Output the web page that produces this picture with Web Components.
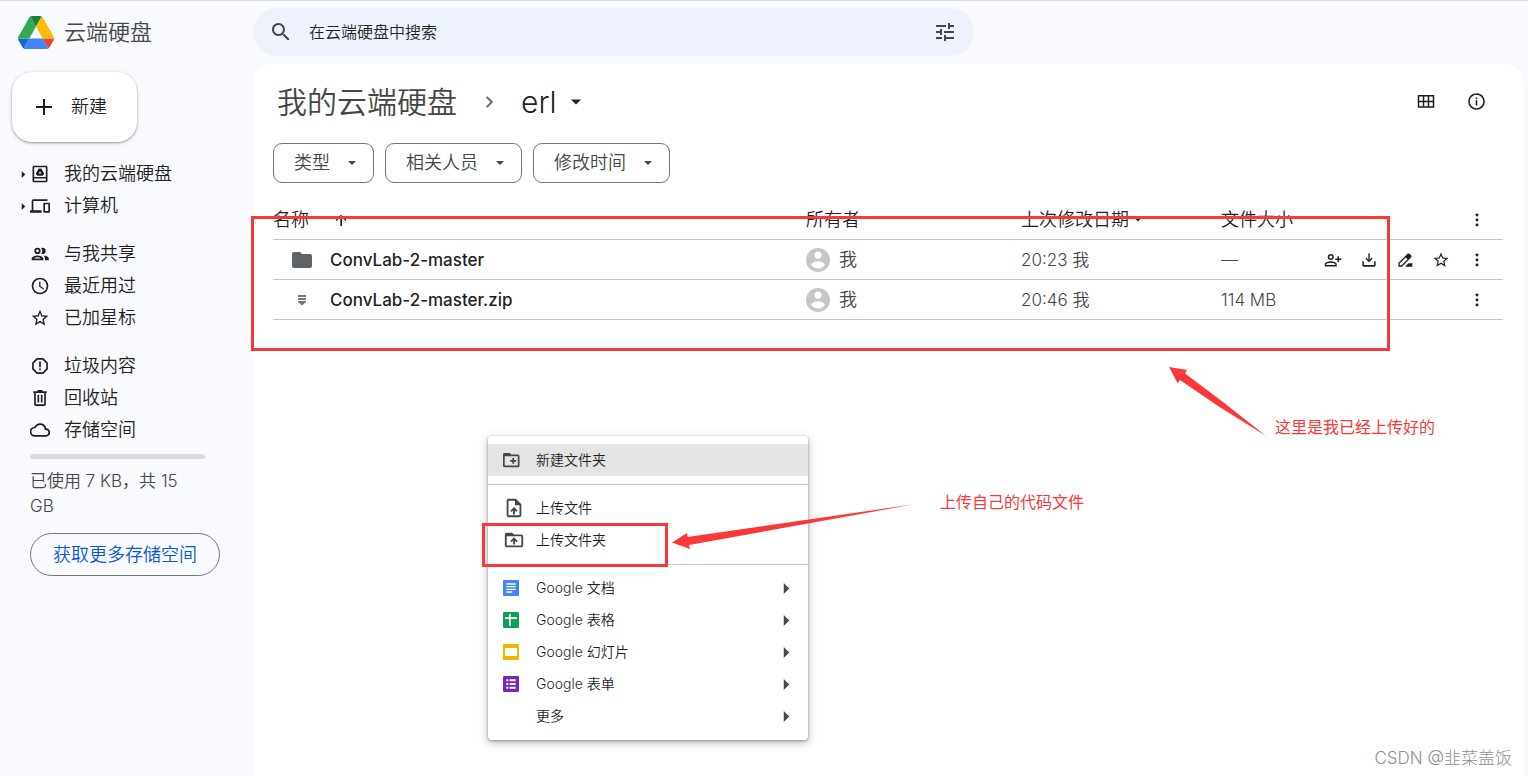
<!DOCTYPE html>
<html lang="zh-CN">
<head>
<meta charset="utf-8">
<title>erl - Google 云端硬盘</title>
<style>
html{height:100%}
body{margin:0;min-height:100%;display:flex;flex-direction:column;background:#f8fafd;color:#1f1f1f;font-family:Inter,"Noto Sans CJK SC",sans-serif;font-weight:350;font-size:18px}
</style>
</head>
<body>
<drive-app></drive-app>
<script>
const ICONS = {
  search: '<path d="M15.500 14h-.8l-.3-.3A6.500 6.500 0 1 0 13.700 14.400l.3.3v.8l5 5 1.500-1.500-5-5zm-6 0a4.500 4.500 0 1 1 0-9 4.500 4.500 0 0 1 0 9z"/>',
  tune: '<path d="M3 17v2h6v-2H3zM3 5v2h10V5H3zm10 16v-2h8v-2h-8v-2h-2v6h2zM7 9v2H3v2h4v2h2V9H7zm14 4v-2H11v2h10zm-6-4h2V7h4V5h-4V3h-2v6z"/>',
  plus: '<path d="M4 11h7V4h2v7h7v2h-7v7h-2v-7H4z"/>',
  drive: '<path d="M5 2h14a2 2 0 0 1 2 2v16a2 2 0 0 1-2 2H5a2 2 0 0 1-2-2V4a2 2 0 0 1 2-2zm0 2v11.500h14V4zm0 13.500V20h14v-2.500z" fill-rule="evenodd"/><path d="M10.500 5.500h3l3.500 5.800-1.500 2.700h-7L7 11.300zM12 8.600l-1.500 2.700h3z" fill-rule="evenodd"/>',
  devices: '<path d="M4 6h17V4H4a2 2 0 0 0-2 2v11H0v3h14v-3H4V6zm19 2h-6a1 1 0 0 0-1 1v10a1 1 0 0 0 1 1h6a1 1 0 0 0 1-1V9a1 1 0 0 0-1-1zm-1 10h-4v-8h4v8z"/>',
  people: '<path d="M9 13.700c-2.300 0-7 1.200-7 3.500V19.500h14v-2.300c0-2.300-4.700-3.500-7-3.500zM4.300 17.500c.8-.9 3-1.700 4.700-1.700s3.900.8 4.700 1.700zM9 12a3.700 3.700 0 1 0 0-7.500A3.700 3.700 0 0 0 9 12zm0-5.400a1.700 1.700 0 1 1 0 3.400 1.700 1.700 0 0 1 0-3.400zm7 7.200c1.200.8 2 1.900 2 3.400v2.300h4.500v-2.300c0-2-3.500-3.100-6.500-3.400zM15 12a3.700 3.700 0 1 0 0-7.500c-.5 0-1.100.1-1.600.4a5.500 5.500 0 0 1 0 6.700c.5.200 1 .4 1.600.4z"/>',
  clock: '<path d="M12 2a10 10 0 1 0 0 20 10 10 0 0 0 0-20zm0 18a8 8 0 1 1 0-16 8 8 0 0 1 0 16zm.5-13H11v6l5.200 3.200.8-1.300-4.500-2.700z"/>',
  star: '<path d="M22 9.200l-7.200-.6L12 2 9.200 8.600 2 9.200l5.500 4.800L5.800 21 12 17.300 18.200 21l-1.600-7zM12 15.400l-3.800 2.300 1-4.300-3.300-2.900 4.400-.4L12 6.100l1.700 4 4.400.4-3.300 2.900 1 4.300z"/>',
  spam: '<path d="M15.900 2.500H8.100L2.500 8.100v7.800l5.600 5.600h7.800l5.600-5.600V8.100zM19.500 15.100l-4.400 4.400H8.900l-4.400-4.400V8.900l4.400-4.400h6.200l4.400 4.400z" fill-rule="evenodd"/><path d="M11 6.500h2v7h-2zM11 15h2v2.200h-2z"/>',
  trash: '<path d="M9 2.500h6V4h5v2h-1v13.500a2 2 0 0 1-2 2H7a2 2 0 0 1-2-2V6H4V4h5zM7 6v13.500h10V6z" fill-rule="evenodd"/><path d="M9 8h2v9.500H9zM13 8h2v9.500h-2z"/>',
  cloud: '<path d="M19.400 10A7.500 7.500 0 0 0 12 4C9.100 4 6.600 5.600 5.400 8A6 6 0 0 0 6 20h13a5 5 0 0 0 .4-10zM19 18H6a4 4 0 0 1-.4-8l1-.1.5-1A5.500 5.500 0 0 1 17.400 10.400l.3 1.500 1.500.1A3 3 0 0 1 19 18z"/>',
  grid: '<path d="M1 4h22v17H1zm2 2v5.500h4.700V6zm6.700 0v5.500h4.600V6zm6.600 0v5.500H21V6zM3 13.500V19h4.700v-5.500zm6.700 0V19h4.600v-5.500zm6.600 0V19H21v-5.500z" fill-rule="evenodd"/>',
  info: '<path d="M11 10.500h2V17h-2zM11 7h2v2h-2zm1-5.500a10.500 10.500 0 1 0 0 21 10.500 10.500 0 0 0 0-21zm0 19a8.500 8.500 0 1 1 0-17 8.500 8.500 0 0 1 0 17z"/>',
  up: '<path d="M4 12l1.400 1.400L11 7.800V21h2.500V7.800l5.100 5.600L20 12l-8-8z"/>',
  chevron: '<path d="M10 5L8.400 6.600l5.400 5.400-5.400 5.400L10 19l7-7z"/>',
  folder: '<path d="M10 4H4a2 2 0 0 0-2 2v12c0 1.100.9 2 2 2h16a2 2 0 0 0 2-2V8a2 2 0 0 0-2-2h-8z"/>',
  zip: '<path d="M4 2h16v4H4zM4 8h16v4H4zM4 14h16v2l-8 7-8-7z"/>',
  avatar: '<path d="M12 0a12 12 0 1 0 0 24 12 12 0 0 0 0-24zm0 3.500a3.600 3.600 0 1 1 0 7.200 3.600 3.600 0 0 1 0-7.200zM12 20.500c-3 0-5.600-1.500-7-3.800.7-2.300 4.700-3.500 7-3.500s6.300 1.200 7 3.500c-1.400 2.300-4 3.800-7 3.800z" fill-rule="evenodd"/>',
  share: '<path d="M9 12a4 4 0 1 0 0-8 4 4 0 0 0 0 8zm0-6a2 2 0 1 1 0 4 2 2 0 0 1 0-4zm0 7.500c-2.700 0-8 1.300-8 4V20.500h16v-3c0-2.700-5.300-4-8-4zm6 5H3v-1c0-.6 3-2 6-2s6 1.400 6 2zM20 10V7h-2v3h-3v2h3v3h2v-3h3v-2z"/>',
  download: '<path d="M11 2h2v9.500l3-3 1.400 1.500L12 15.500 6.600 10 8 8.500l3 3zM2 14h2.300v5.500h15.400V14H22v6a2 2 0 0 1-2 2H4a2 2 0 0 1-2-2z"/>',
  pen: '<path d="M18.900 2.800a2.500 2.500 0 0 0-3.300 0L2 16.400V22h5.600L21 8.300a2.500 2.500 0 0 0 0-3.300zM6.800 20H4v-2.700L13 8.200l2.800 2.800zM12 22l5-5h6v5z"/>',
  more: '<circle cx="12" cy="4.500" r="2.200"/><circle cx="12" cy="12" r="2.200"/><circle cx="12" cy="19.500" r="2.200"/>',
  newFolder: '<path d="M20 4.500h-9l-2-2H2a2 2 0 0 0-2 2v15c0 1.100.9 2 2 2h18a2 2 0 0 0 2-2v-13a2 2 0 0 0-2-2zm-.3 14.700H2.300V7h17.400zM12.500 17h2.300v-2.800h2.700V12h-2.700V9.200h-2.300V12H9.700v2.200h2.800z"/>',
  upFile: '<path d="M14 2H6a2 2 0 0 0-2 2v16c0 1.100.9 2 2 2h12a2 2 0 0 0 2-2V8zm4 18H6V4h7v5h5zM8 15l1.400 1.400 1.600-1.600V19h2v-4.200l1.600 1.600L16 15l-4-4z"/>',
  upFolder: '<path d="M20 6h-8l-2-2H4a2 2 0 0 0-2 2v12c0 1.100.9 2 2 2h16a2 2 0 0 0 2-2V8a2 2 0 0 0-2-2zm0 12H4V8h16zM8 13l1.400 1.400 1.600-1.600V17h2v-4.200l1.600 1.600L16 13l-4-4z"/>',
  docs: '<rect width="24" height="24" rx="2" fill="#4285f4"/><path d="M5 5h14v2H5zM5 9h14v2H5zM5 13h14v2H5zM5 17h9v2H5z" fill="#fff"/>',
  sheets: '<rect width="24" height="24" rx="2" fill="#0f9d58"/><path d="M3 8h6V3h2.500v5H21v2.500h-9.500V21H9V10.500H3z" fill="#fff"/>',
  slides: '<rect width="24" height="24" rx="2" fill="#f4b400"/><path d="M3 6h18v12H3z" fill="#fff"/>',
  forms: '<rect width="24" height="24" rx="2" fill="#7627bb"/><path d="M5 5h3v3H5zM10 5h9v3h-9zM5 10.500h3v3H5zM10 10.500h9v3h-9zM5 16h3v3H5zM10 16h9v3h-9z" fill="#fff"/>',
  none: '',
  caretDown: '<path d="M0 6h24L12 18z"/>',
  caretRight: '<path d="M6 0v24l12-12z"/>'
};

function define(name, html, setup) {
  const tpl = document.createElement('template');
  tpl.innerHTML = html;
  customElements.define(name, class extends HTMLElement {
    connectedCallback() {
      if (this.shadowRoot) return;
      const root = this.attachShadow({mode: 'open'});
      root.append(tpl.content.cloneNode(true));
      if (setup) setup(this, root);
    }
  });
}

define('g-icon', `<style>:host{display:inline-flex;flex:none;width:var(--size,20px);height:var(--size,20px)}svg{display:block;width:100%;height:100%;fill:currentColor}</style><svg viewBox="0 0 24 24" aria-hidden="true"></svg>`,
  (el, root) => {
    root.querySelector('svg').innerHTML = ICONS[el.getAttribute('name')] || '';
    if (el.hasAttribute('size')) el.style.setProperty('--size', el.getAttribute('size') + 'px');
  });

define('icon-button', `<style>
:host{display:inline-flex;flex:none}
button{display:flex;align-items:center;justify-content:center;width:36px;height:36px;padding:0;border:0;border-radius:18px;background:none;color:inherit}
</style><button type="button"></button>`,
  (el, root) => {
    const b = root.querySelector('button');
    b.innerHTML = `<g-icon name="${el.getAttribute('icon')}" size="${el.getAttribute('size') || 18}"></g-icon>`;
    b.setAttribute('aria-label', el.getAttribute('label'));
  });

define('drive-brand', `<style>
:host{display:block;width:235px;flex:none;padding-left:18px;box-sizing:border-box}
a{display:flex;align-items:center;gap:10px;color:#444746;text-decoration:none;font-size:22px;line-height:32px}
svg{width:36px;height:33px}
</style>
<a href="#"><svg viewBox="0 0 87.300 78" preserveAspectRatio="none" aria-hidden="true">
<path d="m6.600 66.850 3.850 6.650c.8 1.400 1.950 2.500 3.300 3.300l13.750-23.800h-27.500c0 1.550.4 3.100 1.200 4.500z" fill="#1967d2"/>
<path d="m43.650 25-13.750-23.800c-1.350.8-2.500 1.900-3.300 3.300l-25.400 44a9.060 9.060 0 0 0 -1.200 4.500h27.500z" fill="#34a853"/>
<path d="m73.550 76.800c1.350-.8 2.500-1.900 3.300-3.300l1.600-2.750 7.650-13.250c.8-1.400 1.200-2.950 1.200-4.500h-27.500z" fill="#ea4335"/>
<path d="m43.650 25 13.750-23.800c-1.350-.8-2.900-1.200-4.500-1.200h-18.500c-1.600 0-3.150.45-4.500 1.200z" fill="#188038"/>
<path d="m59.800 53h-32.300l-13.750 23.800c1.350.8 2.900 1.200 4.500 1.200h50.800c1.600 0 3.150-.45 4.500-1.200z" fill="#4285f4"/>
<path d="m73.400 26.500-12.700-22c-.8-1.400-1.950-2.500-3.300-3.300l-13.750 23.800 16.150 28h27.450c0-1.550-.4-3.100-1.200-4.500z" fill="#fbbc04"/>
</svg><span>云端硬盘</span></a>`);

define('search-bar', `<style>
:host{display:block;flex:0 1 721px;min-width:0}
form{display:flex;align-items:center;height:48px;padding:0 11px 0 10px;border-radius:24px;background:#edf2fc;color:#444746}
input{flex:1;min-width:0;margin:0 10px;padding:0;border:0;background:none;outline:0;font:inherit;font-size:16px;line-height:24px;color:#1f1f1f}
input::placeholder{color:#1f1f1f;opacity:1}
</style><form role="search"><icon-button icon="search" label="搜索" size="24"></icon-button><input type="text" aria-label="在云端硬盘中搜索" placeholder="在云端硬盘中搜索"><icon-button icon="tune" label="高级搜索" size="24"></icon-button></form>`);

define('new-button', `<style>
:host{display:block;margin-left:12px}
button{display:flex;align-items:center;gap:15px;height:70px;padding:0 30px 0 20px;border:0;border-radius:20px;background:#fff;color:#1f1f1f;font:inherit;font-size:18px;line-height:24px;box-shadow:0 1px 2px rgba(60,64,67,.4),0 1px 3px 1px rgba(60,64,67,.12)}
</style><button type="button"><g-icon name="plus" size="24"></g-icon><span><slot></slot></span></button>`);

define('nav-item', `<style>
:host{display:block}
a{display:flex;align-items:center;height:32px;padding-left:20px;color:#1f1f1f;text-decoration:none;font-size:18px;line-height:24px}
.tw{display:flex;width:10px}
.ic{display:flex;width:34px}
</style><a href="#"><span class="tw"></span><span class="ic"></span><slot></slot></a>`,
  (el, root) => {
    root.querySelector('.ic').innerHTML = `<g-icon name="${el.getAttribute('icon')}" size="20"></g-icon>`;
    if (el.hasAttribute('tree')) root.querySelector('.tw').innerHTML = '<g-icon name="caretRight" size="7"></g-icon>';
  });

define('storage-meter', `<style>
:host{display:block;padding:8px 32px 0 30px}
.bar{width:175px;height:5px;border-radius:3px;background:#dadce0}
p{margin:10px 0 14px;color:#444746;font-size:17px;line-height:25px;max-width:160px}
button{height:43px;padding:0 22px;border:1px solid #747775;border-radius:22px;background:none;color:#0b57d0;font:inherit;font-size:18px;line-height:24px;white-space:nowrap}
</style><div class="bar"></div><p>已使用 7 KB，共 15 GB</p><button type="button">获取更多存储空间</button>`);

define('side-bar', `<style>
:host{display:block;flex:none;width:253px;padding-top:8px}
nav{padding-top:16px}
.g{display:flex;flex-direction:column}
.g+.g{margin-top:16px}
</style>
<new-button>新建</new-button>
<nav>
<div class="g"><nav-item icon="drive" tree>我的云端硬盘</nav-item><nav-item icon="devices" tree>计算机</nav-item></div>
<div class="g"><nav-item icon="people">与我共享</nav-item><nav-item icon="clock">最近用过</nav-item><nav-item icon="star">已加星标</nav-item></div>
<div class="g"><nav-item icon="spam">垃圾内容</nav-item><nav-item icon="trash">回收站</nav-item><nav-item icon="cloud">存储空间</nav-item></div>
</nav>
<storage-meter></storage-meter>`);

define('path-bar', `<style>
:host{display:flex;align-items:center;justify-content:space-between;box-sizing:border-box;height:76px;padding:0 9px 8px 4px}
nav{display:flex;align-items:center;padding-top:2px;font-size:30px;line-height:40px}
a{color:#444746;text-decoration:none}
.sep{margin:0 22px;color:#5f6368}
button{display:flex;align-items:center;gap:15px;padding:0;border:0;background:none;font:inherit;color:#1f1f1f}
.tools{display:flex;gap:14px}
</style>
<nav aria-label="路径"><a href="#">我的云端硬盘</a><g-icon class="sep" name="chevron" size="20"></g-icon><button type="button">erl<g-icon name="caretDown" size="10"></g-icon></button></nav>
<div class="tools"><icon-button icon="grid" label="网格视图" size="18"></icon-button><icon-button icon="info" label="查看详细信息" size="19"></icon-button></div>`);

define('filter-chip', `<style>
:host{display:inline-flex}
button{display:flex;align-items:center;gap:18px;height:40px;padding:0 17px 0 20px;border:1px solid #747775;border-radius:9px;background:#fff;color:#444746;font:inherit;font-size:18px;line-height:24px}
</style><button type="button"><span><slot></slot></span><g-icon name="caretDown" size="8"></g-icon></button>`);

define('file-table', `<style>
:host{display:block;margin-top:17px}
table{width:100%;table-layout:fixed;border-collapse:separate;border-spacing:0;font-size:17px;line-height:24px;color:#444746}
th,td{height:39px;padding:0;border-bottom:1px solid #c7c7c7;text-align:left;font-weight:inherit;white-space:nowrap}
th{color:#1f1f1f;font-size:18px}
.owner{width:215px}.date{width:200px}.size{width:94px}.act{width:188px}
.row{display:flex;align-items:center}
.name{gap:17px;padding-left:18px;color:#1f1f1f;font-weight:450}
.name .ic{display:flex;justify-content:center;width:22px;color:#5f6368}
.name .zip{color:#747775}
.own{gap:9px;font-size:18px}.own g-icon{color:#c4c7c5}
.acts{justify-content:flex-end;padding-right:8px;color:#1f1f1f}
.sort{gap:24px}
.by{gap:6px}
</style>
<table>
<thead><tr><th><div class="row sort">名称<g-icon name="up" size="16"></g-icon></div></th><th class="owner">所有者</th><th class="date"><div class="row by">上次修改日期<g-icon name="caretDown" size="6"></g-icon></div></th><th class="size">文件大小</th><th class="act"><div class="row acts"><icon-button icon="more" label="更多" size="16"></icon-button></div></th></tr></thead>
<tbody>
<tr><td><div class="row name"><span class="ic"><g-icon name="folder" size="24"></g-icon></span>ConvLab-2-master</div></td><td><div class="row own"><g-icon name="avatar" size="24"></g-icon>我</div></td><td>20:23 我</td><td>—</td><td><div class="row acts"><icon-button icon="share" label="共享" size="18"></icon-button><icon-button icon="download" label="下载" size="16"></icon-button><icon-button icon="pen" label="重命名" size="16"></icon-button><icon-button icon="star" label="加星标" size="18"></icon-button><icon-button icon="more" label="更多操作" size="16"></icon-button></div></td></tr>
<tr><td><div class="row name"><span class="ic zip"><g-icon name="zip" size="12"></g-icon></span>ConvLab-2-master.zip</div></td><td><div class="row own"><g-icon name="avatar" size="24"></g-icon>我</div></td><td>20:46 我</td><td>114 MB</td><td><div class="row acts"><icon-button icon="more" label="更多操作" size="16"></icon-button></div></td></tr>
</tbody></table>`);

define('file-panel', `<style>
:host{display:block;flex:1;min-width:0;box-sizing:border-box;margin-right:4px;padding:3px 21px 0 20px;border-radius:20px 20px 0 0;background:#fff}
.chips{display:flex;gap:11px}
</style>
<path-bar></path-bar>
<div class="chips"><filter-chip>类型</filter-chip><filter-chip>相关人员</filter-chip><filter-chip>修改时间</filter-chip></div>
<file-table></file-table>`);

define('menu-item', `<style>
:host{display:block}
button{display:flex;align-items:center;width:100%;height:32px;padding:0 16px 0 15px;border:0;background:none;color:#1f1f1f;font:inherit;font-size:14px;line-height:20px;text-align:left}
:host([active]) button{background:#e4e4e4}
.ic{display:flex;width:33px;color:#444746}
.t{flex:1}
.sub{display:flex;color:#444746}
</style><button type="button" role="menuitem"><span class="ic"></span><span class="t"><slot></slot></span><span class="sub"></span></button>`,
  (el, root) => {
    root.querySelector('.ic').innerHTML = `<g-icon name="${el.getAttribute('icon')}" size="${el.getAttribute('size') || 16}"></g-icon>`;
    if (el.hasAttribute('submenu')) root.querySelector('.sub').innerHTML = '<g-icon name="caretRight" size="11"></g-icon>';
  });

define('context-menu', `<style>
:host{position:absolute;left:488px;top:436px;width:320px;box-sizing:border-box;padding:8px 0;border-radius:4px;background:#fff;box-shadow:0 1px 3px rgba(60,64,67,.5),0 3px 8px 1px rgba(60,64,67,.25)}
hr{height:1px;margin:8px 0 7px;border:0;background:#c7c7c7}
</style>
<div role="menu">
<menu-item icon="newFolder" size="18" active>新建文件夹</menu-item><hr>
<menu-item icon="upFile" size="22">上传文件</menu-item><menu-item icon="upFolder" size="22">上传文件夹</menu-item><hr>
<menu-item icon="docs" submenu>Google 文档</menu-item><menu-item icon="sheets" submenu>Google 表格</menu-item><menu-item icon="slides" submenu>Google 幻灯片</menu-item><menu-item icon="forms" submenu>Google 表单</menu-item><menu-item icon="none" submenu>更多</menu-item>
</div>`);

define('markup-layer', `<style>
:host{position:absolute;left:0;top:0;width:100%;height:100%;overflow:hidden;pointer-events:none;color:#fb3838;font-size:16px;line-height:24px;font-weight:400}
div,span,svg{position:absolute;box-sizing:border-box}
div{border:3px solid}
svg{left:0;top:0;fill:currentColor}
.a{left:251px;top:216px;width:1139px;height:135px}
.b{left:482px;top:523px;width:186px;height:44px}
.c{left:1275px;top:415px}
.d{left:940px;top:490px}
.w{right:16px;bottom:6px;color:#8f8f8f;font-size:17px;font-weight:300}
</style>
<div class="a"></div><div class="b"></div>
<svg width="1528" height="776" aria-hidden="true"><path d="M1169 367l18 3-2 3.500 38 28.500 43 34-48-30-38-26-2.500 3zM672 542.500l15-9.500.7 4L914 504.300 808 523.500 689 545l1 4z"/></svg>
<span class="c">这里是我已经上传好的</span><span class="d">上传自己的代码文件</span><span class="w">CSDN @韭菜盖饭</span>`);

define('drive-app', `<style>
:host{position:relative;display:flex;flex:1;flex-direction:column}
header{display:flex;align-items:center;height:64px;box-shadow:inset 0 1px #dadce0}
header search-bar{margin-left:18px}
main{display:flex;flex:1}
</style>
<header><drive-brand></drive-brand><search-bar></search-bar></header>
<main><side-bar></side-bar><file-panel></file-panel></main>
<context-menu></context-menu>
<markup-layer></markup-layer>`);
</script>
</body>
</html>
